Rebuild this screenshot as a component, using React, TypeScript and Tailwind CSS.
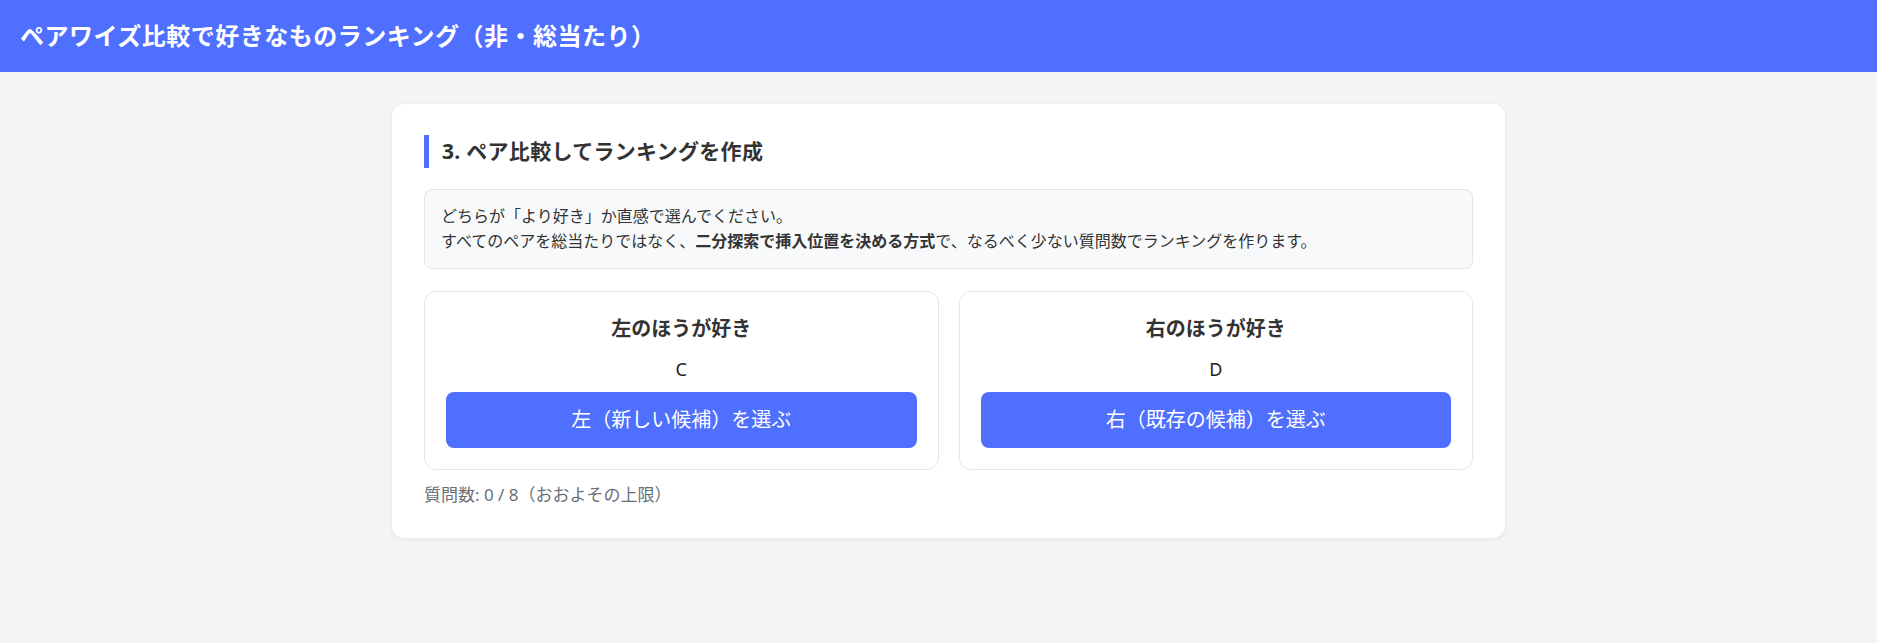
import React from "react";

const FONT = '"Noto Sans", "Noto Sans CJK JP", sans-serif';

function Choice({ title, label, button }: { title: string; label: string; button: string }) {
  return (
    <div className="flex flex-col items-stretch rounded-xl border border-[#e5e7eb] bg-white px-[21px] pt-[22px] pb-[21px] text-center">
      <div className="text-[20px] font-bold leading-[30px] text-[#333]">{title}</div>
      <div className="mt-[12px] text-[18px] leading-[27px] text-[#222]">{label}</div>
      <button className="mt-[9px] h-[56px] rounded-lg bg-[#4f6fff] text-[20px] leading-[30px] text-white">
        {button}
      </button>
    </div>
  );
}

export default function App() {
  return (
    <div className="min-h-[643px] bg-[#f4f4f4]" style={{ fontFamily: FONT }}>
      <header className="flex h-[72px] items-center bg-[#4f6fff] px-5">
        <h1 className="text-[24px] font-bold leading-[36px] tracking-[0.5px] text-white">
          ペアワイズ比較で好きなものランキング（非・総当たり）
        </h1>
      </header>
      <main className="pt-8">
        <section className="ml-[392px] w-[1113px] rounded-xl bg-white px-8 pt-[31px] pb-[30px] shadow-[0_1px_4px_rgba(0,0,0,0.08)]">
          <h2 className="border-l-[5px] border-[#4f6fff] pl-[13px] text-[21px] font-bold leading-[33px] tracking-[0.3px] text-[#333]">
            3. ペア比較してランキングを作成
          </h2>
          <div className="mt-[21px] rounded-lg border border-[#e3e5e8] bg-[#f8f9fb] px-4 py-[14px] text-[16px] leading-[25px] text-[#333]">
            <p>どちらが「より好き」か直感で選んでください。</p>
            <p>
              すべてのペアを総当たりではなく、<strong className="font-bold">二分探索で挿入位置を決める方式</strong>で、なるべく少ない質問数でランキングを作ります。
            </p>
          </div>
          <div className="mt-[22px] grid grid-cols-2 gap-5">
            <Choice title="左のほうが好き" label="C" button="左（新しい候補）を選ぶ" />
            <Choice title="右のほうが好き" label="D" button="右（既存の候補）を選ぶ" />
          </div>
          <p className="mt-[11px] text-[17px] leading-[27px] text-[#6b6f76]">質問数: 0 / 8（おおよその上限）</p>
        </section>
      </main>
    </div>
  );
}
